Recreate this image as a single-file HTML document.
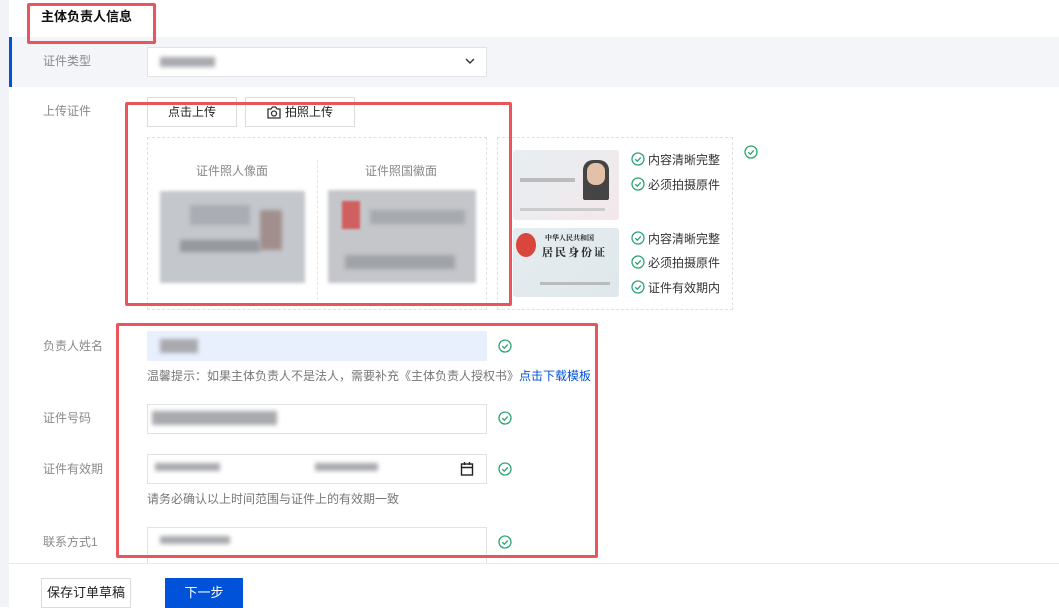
<!DOCTYPE html>
<html><head><meta charset="utf-8"><style>
*{margin:0;padding:0;box-sizing:border-box}
body{width:1059px;height:607px;overflow:hidden;background:#fff;position:relative;font-family:"Liberation Sans","Noto Sans CJK SC",sans-serif;font-size:12px;color:#444}
.a{position:absolute}
.lbl{position:absolute;left:43px;color:#8a8a8a;font-size:12px;line-height:16px}
.inp{position:absolute;left:147px;width:340px;height:30px;border:1px solid #e2e3e6;background:#fff}
.blur{position:absolute;background:#a8aaae;filter:blur(2px);height:10px}
.red{position:absolute;border:3px solid #e8555a;border-radius:2px}
.chk{position:absolute;width:14px;height:14px}
.ct{position:absolute;left:648px;font-size:12px;color:#333}
.btn{position:absolute;border:1px solid #dcdcdc;background:#fff;text-align:center;font-size:12px;color:#222}
</style></head><body>
<div class="a" style="left:0;top:0;width:9px;height:607px;background:#f2f3f6"></div>
<div class="a" style="left:41px;top:6px;font-size:13px;font-weight:bold;color:#111">主体负责人信息</div>
<div class="a" style="left:9px;top:37px;width:1050px;height:50px;background:#f4f5f8"></div>
<div class="a" style="left:9px;top:37px;width:3px;height:50px;background:#0052d9"></div>
<div class="lbl" style="top:53px">证件类型</div>
<div class="inp" style="top:47px"></div>
<div class="blur" style="left:160px;top:57px;width:55px"></div>
<svg class="a" style="left:465px;top:57px" width="10" height="8" viewBox="0 0 10 8"><path d="M1 2l4 4 4-4" stroke="#333" stroke-width="1.4" fill="none"/></svg>
<div class="lbl" style="top:103px">上传证件</div>
<div class="btn" style="left:147px;top:97px;width:90px;height:30px;line-height:28px">点击上传</div>
<div class="btn" style="left:245px;top:97px;width:110px;height:30px;line-height:28px"><svg style="vertical-align:-3px;margin-right:4px" width="14" height="13" viewBox="0 0 14 13"><path d="M1 3h3l1.5-2h3L10 3h3v9H1z" stroke="#333" stroke-width="1.3" fill="none"/><circle cx="7" cy="7.5" r="2.5" stroke="#333" stroke-width="1.3" fill="none"/></svg>拍照上传</div>
<div class="a" style="left:147px;top:137px;width:340px;height:173px;border:1px dashed #e0e0e0"></div>
<div class="a" style="left:317px;top:160px;height:140px;border-left:1px dashed #e6e6e6"></div>
<div class="a" style="left:196px;top:162px;color:#888">证件照人像面</div>
<div class="a" style="left:365px;top:162px;color:#888">证件照国徽面</div>
<div class="a" style="left:160px;top:191px;width:145px;height:92px;background:#c4c8cd;filter:blur(1.5px)"></div>
<div class="a" style="left:190px;top:205px;width:60px;height:20px;background:#a9adb3;filter:blur(2px)"></div>
<div class="a" style="left:260px;top:210px;width:22px;height:40px;background:#a08f8c;filter:blur(2px)"></div>
<div class="a" style="left:180px;top:240px;width:80px;height:12px;background:#95989d;filter:blur(2px)"></div>
<div class="a" style="left:328px;top:190px;width:148px;height:93px;background:#c4c6ca;filter:blur(1.5px)"></div>
<div class="a" style="left:342px;top:201px;width:18px;height:28px;background:#d06060;filter:blur(1px)"></div>
<div class="a" style="left:370px;top:210px;width:95px;height:14px;background:#a6a9ae;filter:blur(2px)"></div>
<div class="a" style="left:345px;top:255px;width:110px;height:14px;background:#a0a3a7;filter:blur(2px)"></div>
<div class="a" style="left:497px;top:137px;width:236px;height:173px;border:1px dashed #e0e0e0"></div>
<div class="a" style="left:513px;top:150px;width:106px;height:70px;background:linear-gradient(135deg,#e6eef2,#f3e8ea);border-radius:3px"></div>
<div class="a" style="left:583px;top:160px;width:26px;height:40px;background:#444;border-radius:10px 10px 2px 2px"></div>
<div class="a" style="left:587px;top:163px;width:18px;height:22px;background:#e3c0a8;border-radius:8px"></div>
<div class="a" style="left:520px;top:178px;width:55px;height:4px;background:#bbb"></div>
<div class="a" style="left:520px;top:208px;width:85px;height:3px;background:#ccc"></div>
<div class="a" style="left:513px;top:228px;width:106px;height:69px;background:linear-gradient(135deg,#e5ecef,#dfe8ec);border-radius:3px"></div>
<div class="a" style="left:516px;top:233px;width:20px;height:24px;background:#d8463c;border-radius:50%"></div>
<div class="a" style="left:545px;top:233px;font-family:'Noto Serif CJK SC',serif;font-size:7px;color:#222;font-weight:bold">中华人民共和国</div>
<div class="a" style="left:542px;top:244px;font-family:'Noto Serif CJK SC',serif;font-size:11px;color:#222;font-weight:bold;letter-spacing:2px">居民身份证</div>
<div class="a" style="left:540px;top:282px;width:70px;height:3px;background:#bbb"></div>
<svg width="0" height="0" style="position:absolute"><defs><g id="c"><circle cx="7" cy="7" r="6" stroke="#2ba471" stroke-width="1.3" fill="none"/><path d="M4.3 7.2l2 2 3.5-3.8" stroke="#2ba471" stroke-width="1.3" fill="none"/></g></defs></svg>
<svg class="chk" style="left:631px;top:152px"><use href="#c"/></svg><div class="ct" style="top:151px">内容清晰完整</div>
<svg class="chk" style="left:631px;top:177px"><use href="#c"/></svg><div class="ct" style="top:176px">必须拍摄原件</div>
<svg class="chk" style="left:631px;top:231px"><use href="#c"/></svg><div class="ct" style="top:230px">内容清晰完整</div>
<svg class="chk" style="left:631px;top:255px"><use href="#c"/></svg><div class="ct" style="top:254px">必须拍摄原件</div>
<svg class="chk" style="left:631px;top:280px"><use href="#c"/></svg><div class="ct" style="top:279px">证件有效期内</div>
<svg class="chk" style="left:744px;top:145px"><use href="#c"/></svg>
<div class="lbl" style="top:338px">负责人姓名</div>
<div class="inp" style="top:331px;background:#e8f0fe;border-color:#e8f0fe"></div>
<div class="blur" style="left:160px;top:339px;width:38px;height:14px"></div>
<svg class="chk" style="left:498px;top:339px"><use href="#c"/></svg>
<div class="a" style="left:147px;top:367px;color:#777">温馨提示：如果主体负责人不是法人，需要补充《主体负责人授权书》<span style="color:#0052d9">点击下载模板</span></div>
<div class="lbl" style="top:410px">证件号码</div>
<div class="inp" style="top:404px"></div>
<div class="blur" style="left:152px;top:411px;width:125px;height:14px"></div>
<svg class="chk" style="left:498px;top:411px"><use href="#c"/></svg>
<div class="lbl" style="top:461px">证件有效期</div>
<div class="inp" style="top:454px"></div>
<div class="blur" style="left:155px;top:463px;width:65px;height:8px"></div>
<div class="blur" style="left:315px;top:463px;width:63px;height:8px"></div>
<svg class="a" style="left:460px;top:461px" width="14" height="15" viewBox="0 0 14 15"><rect x="1.5" y="3" width="11" height="11" stroke="#222" stroke-width="1.4" fill="none"/><path d="M1.5 6.5h11M4.5 1v3M9.5 1v3" stroke="#222" stroke-width="1.4"/></svg>
<svg class="chk" style="left:498px;top:462px"><use href="#c"/></svg>
<div class="a" style="left:147px;top:490px;color:#777">请务必确认以上时间范围与证件上的有效期一致</div>
<div class="lbl" style="top:534px">联系方式1</div>
<div class="inp" style="top:527px;height:37px"></div>
<div class="blur" style="left:160px;top:536px;width:70px;height:8px"></div>
<svg class="chk" style="left:498px;top:535px"><use href="#c"/></svg>
<div class="a" style="left:9px;top:563px;width:1050px;height:44px;background:#fff;border-top:1px solid #e8e8e8"></div>
<div class="btn" style="left:41px;top:578px;width:90px;height:30px;line-height:28px;font-size:13px">保存订单草稿</div>
<div class="a" style="left:165px;top:578px;width:78px;height:30px;background:#0052d9;color:#fff;text-align:center;line-height:30px;font-size:13px">下一步</div>
<div class="red" style="left:27px;top:3px;width:129px;height:41px"></div>
<div class="red" style="left:125px;top:102px;width:387px;height:204px"></div>
<div class="red" style="left:116px;top:323px;width:482px;height:235px"></div>
</body></html>
